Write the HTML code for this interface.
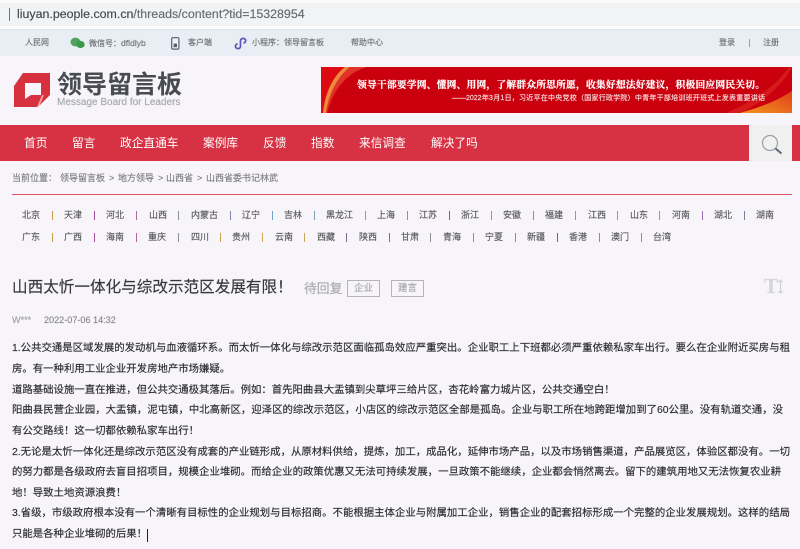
<!DOCTYPE html>
<html lang="zh">
<head>
<meta charset="utf-8">
<title>领导留言板</title>
<style>
html,body{margin:0;padding:0;width:800px;height:549px;overflow:hidden;background:#f7f5fa}
body{font-family:"Liberation Sans","Noto Sans CJK SC",sans-serif;position:relative}
#w{position:absolute;left:0;top:0;width:800px;height:549px;overflow:hidden;filter:blur(.35px);-webkit-text-stroke:.15px currentColor}
.a{position:absolute;white-space:nowrap}
.r{position:absolute}
.l{position:absolute;left:12px;height:20px;line-height:20px;font-size:10.4px;color:#2c2c2c;white-space:nowrap;text-align:justify;text-align-last:justify;text-justify:inter-character}
.n{position:absolute;top:125px;height:36px;line-height:37px;color:#fff;font-size:11.7px;white-space:nowrap;-webkit-text-stroke:0}
.p{position:absolute;font-size:9px;color:#5c5c5c;line-height:12px;white-space:nowrap}
.s{position:absolute;width:1px;height:9px}
.t{position:absolute;font-size:8px;color:#6f747a;line-height:12px;white-space:nowrap}
.b{position:absolute;top:172px;font-size:9px;line-height:12px;color:#808080;white-space:nowrap}
.tag{position:absolute;top:280px;height:15px;border:1px solid #b5b5b5;color:#a8a8a8;font-size:9.5px;line-height:15px;text-align:center}
</style>
</head>
<body>
<div id="w">
<div class="r" style="left:0;top:3px;width:800px;height:23px;background:#f1f3f4"></div>
<div class="r" style="left:0;top:0;width:800px;height:3px;background:#fafafa"></div>
<div class="r" style="left:0;top:26px;width:800px;height:3px;background:#fff"></div>
<div class="r" style="left:9px;top:8px;width:1px;height:13px;background:#777"></div>
<div class="a" style="left:17px;top:6px;font-size:12.4px;line-height:17px;color:#666a6e"><span style="color:#44474a">liuyan.people.com.cn</span>/threads/content?tid=15328954</div>

<div class="r" style="left:0;top:29px;width:800px;height:27px;background:#e9eef4;border-top:1px solid #dfe3e8;box-sizing:border-box"></div>
<div class="t" style="left:25px;top:37px">人民网</div>
<svg class="r" style="left:70px;top:37px" width="15" height="12" viewBox="0 0 15 12"><ellipse cx="5.5" cy="5" rx="5" ry="4.4" fill="#4fa35a"/><ellipse cx="10.5" cy="7.5" rx="4.2" ry="3.6" fill="#3c9a4b"/></svg>
<div class="t" style="left:89px;top:37px">微信号：<span style="font-size:8.6px">dfldlyb</span></div>
<svg class="r" style="left:171px;top:37px" width="9" height="13" viewBox="0 0 9 13"><rect x=".7" y=".7" width="7.2" height="11.4" rx="1.2" fill="#eef1f5" stroke="#57606d" stroke-width="1.2"/><rect x="2.6" y="6.6" width="3.4" height="3.6" fill="#57606d"/></svg>
<div class="t" style="left:188px;top:37px">客户端</div>
<svg class="r" style="left:234px;top:37px" width="13" height="13" viewBox="0 0 13 13"><path d="M6.5 3.7C6.5 1.8 9 .8 10.6 1.9C12.3 3 11.9 5.6 9.5 6.1M6.5 3.7V9.300C6.500 11.400 4 12.300 2.400 11.100C.8 9.900 1.200 7.300 3.600 6.800" fill="none" stroke="#5d57b8" stroke-width="1.7"/></svg>
<div class="t" style="left:252px;top:37px">小程序：领导留言板</div>
<div class="t" style="left:351px;top:37px">帮助中心</div>
<div class="t" style="left:719px;top:37px">登录</div>
<div class="r" style="left:749px;top:39px;width:1px;height:8px;background:#9aa3ad"></div>
<div class="t" style="left:763px;top:37px">注册</div>

<svg class="r" style="left:13px;top:72px" width="38" height="36" viewBox="0 0 38 36"><path d="M10 1H37V23L25 35H1V14Z" fill="#d7303f"/><path d="M12 11H28V23H18L12 27Z" fill="#f7f5fa"/><path d="M29 23L24 35H26L31 23Z" fill="#f7f5fa" opacity=".6"/></svg>
<div class="a" style="left:57px;top:69px;font-size:25px;line-height:32px;font-weight:bold;color:#484c50;-webkit-text-stroke:0">领导留言板</div>
<div class="a" style="left:57px;top:97px;font-size:10px;line-height:12px;color:#a6a8ad">Message Board for Leaders</div>

<svg class="r" style="left:321px;top:67px" width="471" height="46" viewBox="0 0 471 46"><defs><linearGradient id="o" x1="0" y1="1" x2="1" y2="0"><stop offset="0" stop-color="#f2951f"/><stop offset="1" stop-color="#e0401a"/></linearGradient></defs><rect width="471" height="46" fill="#cb000f"/><path d="M0 0H46C26 6 12 24 7 46H0Z" fill="#dd0a12"/><path d="M2 46C4 26 12 9 24 0H29C17 9 8 26 5 46Z" fill="#ef8a3c"/><path d="M6 46C10 26 24 6 46 0H30C16 8 7 28 5 46Z" fill="#e2503a" opacity=".6"/><path d="M419 46C440 40 458 33 471 24V46Z" fill="url(#o)"/><path d="M405 46C430 35 455 20 468 0H471C460 22 436 38 420 46Z" fill="#dd2a20" opacity=".6"/></svg>
<div class="a" style="left:357px;top:79px;width:408px;font-family:'Liberation Serif','Noto Serif CJK SC',serif;font-size:9.8px;line-height:14px;font-weight:bold;color:#fff;text-align:justify;text-align-last:justify;text-justify:inter-character;-webkit-text-stroke:.2px #fff">领导干部要学网、懂网、用网，了解群众所思所愿，收集好想法好建议，积极回应网民关切。</div>
<div class="a" style="left:452px;top:94px;width:313px;font-size:7px;line-height:10px;color:#f8dcdc;text-align:justify;text-align-last:justify;text-justify:inter-character">——2022年3月1日，习近平在中央党校（国家行政学院）中青年干部培训班开班式上发表重要讲话</div>

<div class="r" style="left:0;top:125px;width:800px;height:36px;background:#d73243"></div>
<div class="r" style="left:749px;top:125px;width:43px;height:36px;background:#f0f0f1"></div>
<svg class="r" style="left:760px;top:133px" width="24" height="23" viewBox="0 0 24 23"><circle cx="10" cy="10" r="7.5" fill="none" stroke="#98a0a8" stroke-width="1.2"/><path d="M15.500 15.500L21.500 20.500" stroke="#5c6670" stroke-width="1.9"/></svg>
<div class="n" style="left:24px">首页</div>
<div class="n" style="left:72px">留言</div>
<div class="n" style="left:120px">政企直通车</div>
<div class="n" style="left:203px">案例库</div>
<div class="n" style="left:263px">反馈</div>
<div class="n" style="left:311px">指数</div>
<div class="n" style="left:359px">来信调查</div>
<div class="n" style="left:431px">解决了吗</div>

<div class="b" style="left:12px">当前位置：</div>
<div class="b" style="left:60px">领导留言板</div>
<div class="b" style="left:109px">&gt;</div>
<div class="b" style="left:118px">地方领导</div>
<div class="b" style="left:158px">&gt;</div>
<div class="b" style="left:166px">山西省</div>
<div class="b" style="left:197px">&gt;</div>
<div class="b" style="left:206px">山西省委书记林武</div>
<div class="r" style="left:12px;top:194px;width:780px;height:1px;background:#e2515f"></div>

<div class="p" style="left:22px;top:209px">北京</div><div class="s" style="left:52px;top:211px;background:#c49a4c"></div>
<div class="p" style="left:64px;top:209px">天津</div><div class="s" style="left:94px;top:211px;background:#a8509f"></div>
<div class="p" style="left:106px;top:209px">河北</div><div class="s" style="left:136px;top:211px;background:#b06aa0"></div>
<div class="p" style="left:149px;top:209px">山西</div><div class="s" style="left:178px;top:211px;background:#8a8f99"></div>
<div class="p" style="left:191px;top:209px">内蒙古</div><div class="s" style="left:230px;top:211px;background:#7d86b0"></div>
<div class="p" style="left:242px;top:209px">辽宁</div><div class="s" style="left:272px;top:211px;background:#72a5c8"></div>
<div class="p" style="left:284px;top:209px">吉林</div><div class="s" style="left:314px;top:211px;background:#7b9fb4"></div>
<div class="p" style="left:326px;top:209px">黑龙江</div><div class="s" style="left:365px;top:211px;background:#9a9a9a"></div>
<div class="p" style="left:377px;top:209px">上海</div><div class="s" style="left:407px;top:211px;background:#8f9398"></div>
<div class="p" style="left:419px;top:209px">江苏</div><div class="s" style="left:449px;top:211px;background:#6a6a88"></div>
<div class="p" style="left:461px;top:209px">浙江</div><div class="s" style="left:491px;top:211px;background:#8b95a5"></div>
<div class="p" style="left:503px;top:209px">安徽</div><div class="s" style="left:533px;top:211px;background:#8490b0"></div>
<div class="p" style="left:545px;top:209px">福建</div><div class="s" style="left:575px;top:211px;background:#8a9bab"></div>
<div class="p" style="left:588px;top:209px">江西</div><div class="s" style="left:617px;top:211px;background:#9a9a90"></div>
<div class="p" style="left:630px;top:209px">山东</div><div class="s" style="left:659px;top:211px;background:#a08ab0"></div>
<div class="p" style="left:672px;top:209px">河南</div><div class="s" style="left:702px;top:211px;background:#9a70b0"></div>
<div class="p" style="left:714px;top:209px">湖北</div><div class="s" style="left:744px;top:211px;background:#75809a"></div>
<div class="p" style="left:756px;top:209px">湖南</div>

<div class="p" style="left:22px;top:231px">广东</div><div class="s" style="left:52px;top:233px;background:#c49a4c"></div>
<div class="p" style="left:64px;top:231px">广西</div><div class="s" style="left:94px;top:233px;background:#a8509f"></div>
<div class="p" style="left:106px;top:231px">海南</div><div class="s" style="left:136px;top:233px;background:#b06aa0"></div>
<div class="p" style="left:148px;top:231px">重庆</div><div class="s" style="left:178px;top:233px;background:#8a8f99"></div>
<div class="p" style="left:191px;top:231px">四川</div><div class="s" style="left:220px;top:233px;background:#c9a050"></div>
<div class="p" style="left:232px;top:231px">贵州</div><div class="s" style="left:262px;top:233px;background:#d0a555"></div>
<div class="p" style="left:275px;top:231px">云南</div><div class="s" style="left:304px;top:233px;background:#c9a460"></div>
<div class="p" style="left:317px;top:231px">西藏</div><div class="s" style="left:346px;top:233px;background:#7a6a90"></div>
<div class="p" style="left:359px;top:231px">陕西</div><div class="s" style="left:389px;top:233px;background:#777"></div>
<div class="p" style="left:401px;top:231px">甘肃</div><div class="s" style="left:430px;top:233px;background:#8b8f96"></div>
<div class="p" style="left:443px;top:231px">青海</div><div class="s" style="left:473px;top:233px;background:#8b8f96"></div>
<div class="p" style="left:485px;top:231px">宁夏</div><div class="s" style="left:515px;top:233px;background:#8b8f96"></div>
<div class="p" style="left:527px;top:231px">新疆</div><div class="s" style="left:557px;top:233px;background:#66667c"></div>
<div class="p" style="left:569px;top:231px">香港</div><div class="s" style="left:599px;top:233px;background:#8b8f96"></div>
<div class="p" style="left:611px;top:231px">澳门</div><div class="s" style="left:641px;top:233px;background:#8b8f96"></div>
<div class="p" style="left:653px;top:231px">台湾</div>

<div class="a" style="left:12px;top:278px;font-size:15.6px;line-height:20px;color:#383838">山西太忻一体化与综改示范区发展有限！</div>
<div class="a" style="left:304px;top:280px;font-size:12.8px;line-height:18px;color:#a9a9a9">待回复</div>
<div class="tag" style="left:347px;width:31px">企业</div>
<div class="tag" style="left:391px;width:31px">建言</div>
<div class="a" style="left:764px;top:274px;font-family:'Liberation Serif',serif;font-weight:bold;font-size:21px;line-height:24px;color:#d6d6d6">T</div>
<svg class="r" style="left:777px;top:279px" width="7" height="15" viewBox="0 0 7 15"><path d="M3.5 1V14M1.500 3L3.500 1L5.500 3M1.500 12L3.500 14L5.500 12" fill="none" stroke="#d0d0d0" stroke-width="1.2"/></svg>

<div class="a" style="left:12px;top:314px;font-size:9.1px;line-height:12px;color:#a0a0a0">W***</div>
<div class="a" style="left:44px;top:314px;font-size:9.1px;line-height:12px;color:#8a8a8a">2022-07-06 14:32</div>

<div class="l" style="top:339px;width:778px">1.公共交通是区域发展的发动机与血液循环系。而太忻一体化与综改示范区面临孤岛效应严重突出。企业职工上下班都必须严重依赖私家车出行。要么在企业附近买房与租</div>
<div class="l" style="top:360px;width:210px">房。有一种利用工业企业开发房地产市场嫌疑。</div>
<div class="l" style="top:381px;width:597px">道路基础设施一直在推进，但公共交通极其落后。例如：首先阳曲县大盂镇到尖草坪三给片区，杏花岭富力城片区，公共交通空白！</div>
<div class="l" style="top:401px;width:771px">阳曲县民营企业园，大盂镇，泥屯镇，中北高新区，迎泽区的综改示范区，小店区的综改示范区全部是孤岛。企业与职工所在地跨距增加到了60公里。没有轨道交通，没</div>
<div class="l" style="top:422px;width:181px">有公交路线！这一切都依赖私家车出行！</div>
<div class="l" style="top:443px;width:778px">2.无论是太忻一体化还是综改示范区没有成套的产业链形成，从原材料供给，提炼，加工，成品化，延伸市场产品，以及市场销售渠道，产品展览区，体验区都没有。一切</div>
<div class="l" style="top:463px;width:769px">的努力都是各级政府去盲目招项目，规模企业堆砌。而给企业的政策优惠又无法可持续发展，一旦政策不能继续，企业都会悄然离去。留下的建筑用地又无法恢复农业耕</div>
<div class="l" style="top:484px;width:108px">地！导致土地资源浪费！</div>
<div class="l" style="top:504px;width:778px">3.省级，市级政府根本没有一个清晰有目标性的企业规划与目标招商。不能根据主体企业与附属加工企业，销售企业的配套招标形成一个完整的企业发展规划。这样的结局</div>
<div class="l" style="top:525px;width:129px">只能是各种企业堆砌的后果！</div>
<div class="r" style="left:147px;top:529px;width:1px;height:13px;background:#222"></div>
</div>
</body>
</html>
